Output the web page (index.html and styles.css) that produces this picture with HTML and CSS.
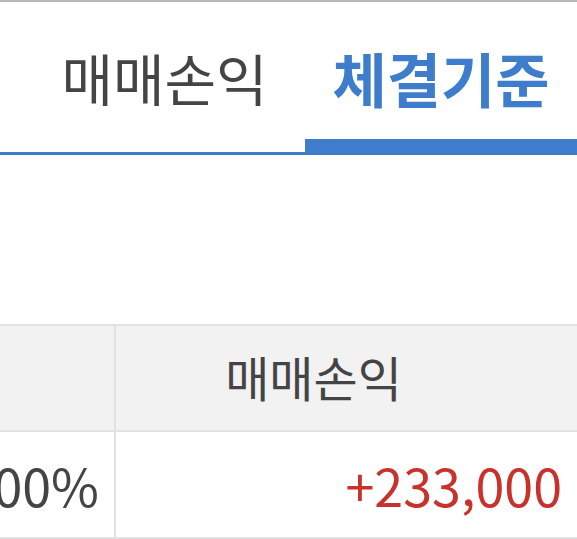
FILE: index.html
```html
<!DOCTYPE html>
<html lang="ko">

<head>
  <meta charset="UTF-8" />
  <meta name="viewport" content="width=device-width, initial-scale=1.0" />
  <title>매매손익</title>
  <link rel="stylesheet" href="styles.css">
</head>

<body>
  <div class="page">
    <ul class="tab-nav">
      <li><a href="javascript:;">매매손익</a></li>
      <li><a class="active" href="javascript:;">체결기준</a></li>
    </ul>
    <div class="result">
      <div class="row head">
        <div class="cell rate">&nbsp;</div>
        <div class="cell amount">매매손익</div>
      </div>
      <div class="row body">
        <div class="cell rate">00%</div>
        <div class="cell amount up">+233,000</div>
      </div>
    </div>
  </div>
</body>

</html>
```

FILE: styles.css
```css
* {
  margin: 0;
  padding: 0;
  box-sizing: border-box;
}

body {
  font-family: "Noto Sans CJK KR", "Noto Sans", sans-serif;
  color: #444;
  background: #fff;
}

.page {
  border-top: 2px solid #b8b8b8;
}

.tab-nav {
  list-style: none;
  display: flex;
  height: 153px;
}

.tab-nav li {
  display: flex;
}

.tab-nav li:first-child {
  flex: 1;
}

.tab-nav li:last-child {
  width: 272px;
}

.tab-nav a {
  flex: 1;
  padding-top: 47px;
  font-size: 56px;
  line-height: 1;
  text-align: center;
  text-decoration: none;
  color: #444;
  border-bottom: 3px solid #3d7dcc;
}

.tab-nav li:first-child a {
  padding-left: 24px;
}

.tab-nav a.active {
  padding-top: 46px;
  font-size: 59px;
  font-weight: bold;
  color: #3d7dcc;
  border-bottom-width: 16px;
}

.result {
  margin-top: 169px;
  border-top: 2px solid #e2e2e2;
}

.row {
  display: grid;
  grid-template-columns: 116px 1fr;
  border-bottom: 2px solid #e2e2e2;
}

.row.head {
  height: 106px;
  background: #f2f2f2;
}

.row.body {
  height: 107px;
}

.cell {
  display: flex;
  align-items: center;
  white-space: nowrap;
}

.cell.rate {
  border-right: 2px solid #e2e2e2;
  justify-content: flex-end;
  padding-right: 15px;
}

.head .cell {
  font-size: 48px;
  padding-bottom: 4px;
}

.head .cell.amount {
  justify-content: center;
  padding-right: 66px;
}

.body .cell {
  font-size: 52px;
}

.body .cell.amount {
  justify-content: flex-end;
  padding-right: 15px;
}

.up {
  color: #c8322b;
}
```
